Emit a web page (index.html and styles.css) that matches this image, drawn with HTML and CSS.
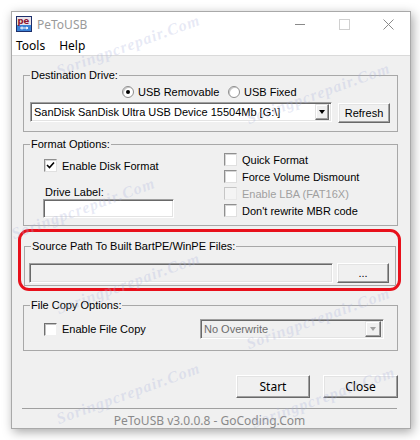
FILE: index.html
```html
<!DOCTYPE html>
<html>
<head>
<meta charset="utf-8">
<link rel="stylesheet" href="styles.css">
</head>
<body>
<div class="window">
  <div class="titlebar">
    <svg class="appicon" width="16" height="16" viewBox="0 0 16 16">
      <rect x="0.5" y="0.5" width="15" height="15" fill="#3b82d6" stroke="#1d2f6b"/>
      <rect x="1" y="1" width="14" height="8" fill="#e9e4ea"/>
      <text x="1.5" y="8" font-family="DejaVu Sans, sans-serif" font-weight="bold" font-size="8.5" fill="#8e1630">pe</text>
      <path d="M4 12h8M6 10.5v3M10 11l2 1-2 1" stroke="#fff" stroke-width="1" fill="none"/>
    </svg>
    <span class="title">PeToUSB</span>
    <div class="controls">
      <span class="ctl"><svg width="10" height="10" viewBox="0 0 10 10"><path d="M0 5.5h10" stroke="#8a8a8a" stroke-width="1"/></svg></span>
      <span class="ctl"><svg width="11" height="11" viewBox="0 0 11 11"><rect x="0.5" y="0.5" width="10" height="10" fill="none" stroke="#d0d0d0"/></svg></span>
      <span class="ctl"><svg width="11" height="11" viewBox="0 0 11 11"><path d="M0.5 0.5l10 10M10.5 0.5l-10 10" stroke="#8a8a8a" stroke-width="1"/></svg></span>
    </div>
  </div>
  <div class="menubar"><span class="menu">Tools</span><span class="menu">Help</span></div>
  <div class="client">
    <fieldset class="group g-dest">
      <legend>Destination Drive:</legend>
      <div class="gbody dest-body">
        <div class="radios">
          <span class="radio r-first"><span class="rb on"></span>USB Removable</span>
          <span class="radio"><span class="rb"></span>USB Fixed</span>
        </div>
        <div class="row">
          <div class="combo sunken drive-combo"><span class="combo-text">SanDisk SanDisk Ultra USB Device 15504Mb [G:\]</span><span class="drop"><span class="arrow"></span></span></div>
          <span class="btn refresh">Refresh</span>
        </div>
      </div>
    </fieldset>

    <fieldset class="group g-format">
      <legend>Format Options:</legend>
      <div class="gbody format-body">
        <div class="col-left">
          <span class="check"><span class="cb"><svg width="9" height="9" viewBox="0 0 9 9"><path d="M1 4l2.5 2.5L8 1.5" stroke="#000" stroke-width="1.6" fill="none"/></svg></span>Enable Disk Format</span>
          <span class="field-label">Drive Label:</span>
          <span class="input sunken label-input"></span>
        </div>
        <div class="col-right">
          <span class="check"><span class="cb"></span>Quick Format</span>
          <span class="check"><span class="cb"></span>Force Volume Dismount</span>
          <span class="check disabled"><span class="cb"></span>Enable LBA (FAT16X)</span>
          <span class="check"><span class="cb"></span>Don't rewrite MBR code</span>
        </div>
      </div>
    </fieldset>

    <div class="highlight">
      <fieldset class="group g-source">
        <legend>Source Path To Built BartPE/WinPE Files:</legend>
        <div class="gbody source-body">
          <span class="input sunken path-input"></span>
          <span class="btn browse">...</span>
        </div>
      </fieldset>
    </div>

    <fieldset class="group g-copy">
      <legend>File Copy Options:</legend>
      <div class="gbody copy-body">
        <span class="check"><span class="cb cb-dis"></span>Enable File Copy</span>
        <div class="combo sunken overwrite-combo"><span class="combo-text">No Overwrite</span><span class="drop"><span class="arrow"></span></span></div>
      </div>
    </fieldset>

    <div class="actions">
      <span class="btn action">Start</span>
      <span class="btn action close-btn">Close</span>
    </div>
    <div class="separator"></div>
    <div class="status">PeToUSB v3.0.0.8 - GoCoding.Com</div>
  </div>
</div>

<span class="wm wm1">Soringpcrepair.Com</span>
<span class="wm wm2">Soringpcrepair.Com</span>
<span class="wm wm3">Soringpcrepair.Com</span>
<span class="wm wm4">Soringpcrepair.Com</span>
<span class="wm wm5">Soringpcrepair.Com</span>
<span class="wm wm6">Soringpcrepair.Com</span>
<span class="wm wm7">Soringpcrepair.Com</span>
</body>
</html>
```

FILE: styles.css
```css
* { box-sizing: border-box; }
body {
  margin: 0;
  width: 420px;
  height: 440px;
  overflow: hidden;
  position: relative;
  background: #ffffff;
  font-family: "Liberation Sans", Arial, sans-serif;
  font-size: 11px;
  color: #000;
}
.window {
  margin: 11px 0 0 11px;
  width: 400px;
  height: 418px;
  border: 1px solid #a9a9a9;
  background: #f0f0f0;
  box-shadow: 2px 3px 10px rgba(0,0,0,0.35);
  display: flex;
  flex-direction: column;
}
.titlebar {
  height: 24px;
  background: #fff;
  display: flex;
  align-items: center;
  padding-left: 4px;
}
.appicon { display: block; margin-top: -1px; }
.title {
  margin-left: 5px;
  font-family: "Noto Sans", "Open Sans", sans-serif;
  font-size: 12px;
  color: #9a9a9a;
}
.controls { margin-left: auto; display: flex; height: 100%; }
.ctl {
  width: 44px;
  display: flex;
  align-items: center;
  justify-content: center;
}
.ctl svg { display: block; }
.menubar {
  height: 19px;
  background: #fff;
  display: flex;
  align-items: center;
  padding-left: 4px;
  gap: 14px;
  font-family: "Noto Sans", "Open Sans", sans-serif;
  font-size: 12px;
}
.client {
  flex: 1;
  border-top: 1px solid #dadada;
  display: flex;
  flex-direction: column;
}
.group {
  margin: 0 12px 0 11px;
  padding: 0;
  border: 1px solid #a8a8a8;
  min-width: 0;
}
.group legend {
  margin-left: 6px;
  padding: 0 1px;
  line-height: 14px;
  font-size: 11px;
}
.g-dest { margin-top: 12px; }
.dest-body { padding: 2px 7px 8px 6px; }
.radios { display: flex; padding-left: 92px; height: 16px; align-items: center; }
.radio { display: flex; align-items: center; gap: 4px; }
.r-first { width: 106px; }
.rb {
  width: 12px; height: 12px; border-radius: 50%;
  background: #fff;
  border: 1px solid #8e8e8e;
  box-shadow: inset 1px 1px 0 #c8c8c8;
  display: flex; align-items: center; justify-content: center;
}
.rb.on::after {
  content: ""; width: 4px; height: 4px; border-radius: 50%; background: #000;
}
.row { display: flex; margin-top: 2px; gap: 6px; }
.sunken {
  border: 1px solid;
  border-color: #a0a0a0 #ffffff #ffffff #a0a0a0;
  box-shadow: inset 1px 1px 0 #696969, inset -1px -1px 0 #e3e3e3;
}
.combo {
  display: flex;
  align-items: center;
  background: #fff;
  height: 20px;
  padding: 2px;
}
.drive-combo { width: 302px; }
.combo-text { flex: 1; padding-left: 1px; white-space: nowrap; overflow: hidden; }
.drop {
  width: 14px; height: 16px;
  background: #f0f0f0;
  border: 1px solid;
  border-color: #e3e3e3 #696969 #696969 #e3e3e3;
  box-shadow: inset -1px -1px 0 #a0a0a0, inset 1px 1px 0 #fff;
  display: flex; align-items: center; justify-content: center;
}
.arrow {
  width: 0; height: 0;
  border-left: 3.5px solid transparent;
  border-right: 3.5px solid transparent;
  border-top: 4px solid #000;
}
.btn {
  display: flex;
  align-items: center;
  justify-content: center;
  background: #f0f0f0;
  border: 1px solid;
  border-color: #fff #696969 #696969 #fff;
  box-shadow: inset -1px -1px 0 #a0a0a0, inset 1px 1px 0 #e3e3e3;
  font-size: 11px;
}
.refresh { width: 52px; height: 20px; margin-top: 1px; }

.g-format { margin-top: 5px; }
.format-body {
  display: grid;
  grid-template-columns: 180px 1fr;
  padding: 0 0 6px 20px;
}
.col-left { display: flex; flex-direction: column; padding-top: 6px; }
.col-right { display: flex; flex-direction: column; }
.check {
  display: flex;
  align-items: center;
  gap: 5px;
  height: 17px;
}
.cb {
  width: 13px; height: 13px;
  background: #fff;
  border: 1px solid;
  border-color: #8f8f8f #e0e0e0 #e0e0e0 #8f8f8f;
  box-shadow: inset 1px 1px 0 #d6d6d6;
  display: flex; align-items: center; justify-content: center;
  flex: none;
}
.check.disabled { color: #a0a0a0; }
.check.disabled .cb { border-color: #c6c6c6 #e8e8e8 #e8e8e8 #c6c6c6; box-shadow: none; background: #f4f4f4; }
.field-label { margin-top: 12px; line-height: 13px; padding-left: 1px; }
.input { display: block; background: #fff; }
.label-input { width: 131px; height: 19px; margin-left: -1px; }

.highlight {
  margin: 3px 9px 0 6px;
  border: 3px solid #e8101b;
  border-radius: 11px;
  padding: 7px 2px 0 3px;
  height: 62px;
}
.g-source { margin: 0; }
.source-body { display: flex; gap: 4px; padding: 10px 6px 2px 4px; }
.path-input { width: 305px; height: 20px; background: #f0f0f0; }
.browse { width: 52px; height: 20px; }

.g-copy { margin-top: 7px; }
.copy-body { display: flex; align-items: center; padding: 7px 0 11px 20px; }
.copy-body .check { width: 156px; }
.cb-dis { border-color: #707070 #f0f0f0 #f0f0f0 #707070; box-shadow: inset 1px 1px 0 #c0c0c0; }
.overwrite-combo { width: 184px; background: #f0f0f0; color: #6d6d6d; }
.overwrite-combo .arrow { border-top-color: #a0a0a0; }
.overwrite-combo .drop { width: 16px; }

.actions {
  display: flex;
  justify-content: flex-end;
  gap: 13px;
  padding-right: 12px;
  margin-top: 24px;
}
.action { width: 74px; height: 23px; font-family: "Noto Sans", "Open Sans", sans-serif; font-size: 12px; }
.close-btn { width: 75px; }
.separator {
  margin: 10px 13px 0 10px;
  border-top: 1px solid #a0a0a0;
}
.status {
  margin: 5px 13px 0 10px;
  text-align: center;
  line-height: 14px;
  font-family: "Noto Sans", "Open Sans", sans-serif;
  font-size: 12px;
  color: #8a8a8a;
}

.wm {
  position: absolute;
  font-family: "Liberation Serif", serif;
  font-style: italic;
  font-weight: bold;
  font-size: 16px;
  letter-spacing: 1px;
  color: rgba(170, 178, 220, 0.28);
  transform: rotate(-20deg);
  transform-origin: left bottom;
  white-space: nowrap;
  pointer-events: none;
}
.wm1 { left: 60px; top: 62px; }
.wm2 { left: 15px; top: 225px; }
.wm3 { left: 250px; top: 110px; }
.wm4 { left: 60px; top: 300px; }
.wm5 { left: 250px; top: 335px; }
.wm6 { left: 60px; top: 410px; }
.wm7 { left: 255px; top: 414px; }
```
